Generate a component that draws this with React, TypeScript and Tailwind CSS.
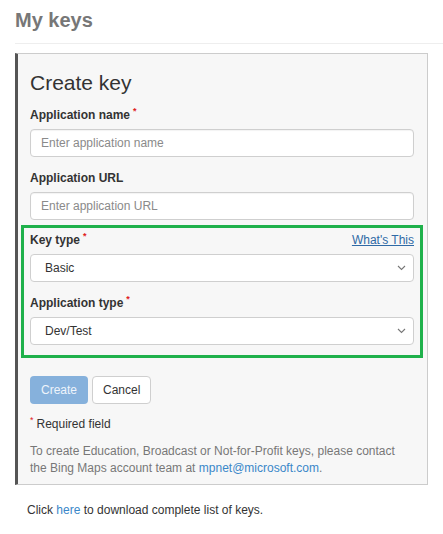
import React from 'react';

function Req() {
  return <span className="relative -top-[5px] ml-[3px] text-[9px] leading-none text-[#e0201b]">*</span>;
}

function Label({ text, required }: { text: string; required?: boolean }) {
  return (
    <div className="mb-[5px] text-[12px] font-bold leading-[18px] text-[#333]">
      {text}
      {required && <Req />}
    </div>
  );
}

function TextInput({ placeholder }: { placeholder: string }) {
  return (
    <input
      placeholder={placeholder}
      className="block h-[28px] w-full rounded-[4px] border border-[#cfcfcf] bg-white px-[10px] text-[12px] text-[#333] shadow-[inset_0_1px_1px_rgba(0,0,0,0.05)] outline-none placeholder:text-[#8a8a8a]"
    />
  );
}

function Select({ value }: { value: string }) {
  return (
    <div className="flex h-[28px] w-full items-center justify-between rounded-[4px] border border-[#cfcfcf] bg-white pl-[14px] pr-[7px] text-[12px] text-[#333]">
      <span>{value}</span>
      <svg width="9" height="6" viewBox="0 0 9 6" fill="none">
        <path d="M1 1l3.5 3.5L8 1" stroke="#777" strokeWidth="1.1" />
      </svg>
    </div>
  );
}

export default function App() {
  return (
    <div className="min-h-screen bg-white pl-[15px] font-['Liberation_Sans',Arial,sans-serif]">
      <h1 className="border-b border-[#eeeeee] pt-[8px] pb-[11px] text-[20px] font-bold leading-[24px] text-[#777]">
        My keys
      </h1>

      <div className="mt-[9px] w-[413px] border border-l-[3px] border-[#cccccc] border-l-[#555] bg-[#f7f7f7] pt-[17px] pr-[13px] pb-[7px] pl-[12px]">
        <h2 className="mb-[11px] text-[21px] leading-[24px] text-[#333]">Create key</h2>

        <Label text="Application name" required />
        <TextInput placeholder="Enter application name" />

        <div className="mt-[12px]">
          <Label text="Application URL" />
          <TextInput placeholder="Enter application URL" />
        </div>

        <div className="-mx-[9px] mt-[5px] border-[3px] border-[#1fb14b] px-[6px] pt-[3px] pb-[10px]">
          <div className="mb-[5px] flex items-center justify-between leading-[18px]">
            <span className="text-[12px] font-bold text-[#333]">
              Key type
              <Req />
            </span>
            <a href="#" className="text-[12px] text-[#2f6aa6] underline">
              What's This
            </a>
          </div>
          <Select value="Basic" />

          <div className="mt-[12px]">
            <Label text="Application type" required />
            <Select value="Dev/Test" />
          </div>
        </div>

        <div className="mt-[18px] flex gap-[4px]">
          <button className="h-[28px] rounded-[4px] bg-[#86b1dc] px-[11px] text-[12px] text-[#eef4fb]">
            Create
          </button>
          <button className="h-[28px] rounded-[4px] border border-[#cfcfcf] bg-white px-[10px] text-[12px] text-[#333]">
            Cancel
          </button>
        </div>

        <div className="mt-[11px] text-[12px] leading-[18px] text-[#333]">
          <span className="relative -top-[5px] mr-[3px] text-[9px] leading-none text-[#e0201b]">*</span>
          Required field
        </div>

        <p className="mt-[10px] text-[12px] leading-[17px] text-[#777]">
          To create Education, Broadcast or Not-for-Profit keys, please contact the Bing Maps account team at{' '}
          <a href="#" className="text-[#3a87c9]">
            mpnet@microsoft.com
          </a>
          .
        </p>
      </div>

      <p className="mt-[16px] pl-[12px] text-[12px] leading-[18px] text-[#333]">
        Click{' '}
        <a href="#" className="text-[#3a87c9]">
          here
        </a>{' '}
        to download complete list of keys.
      </p>
    </div>
  );
}
